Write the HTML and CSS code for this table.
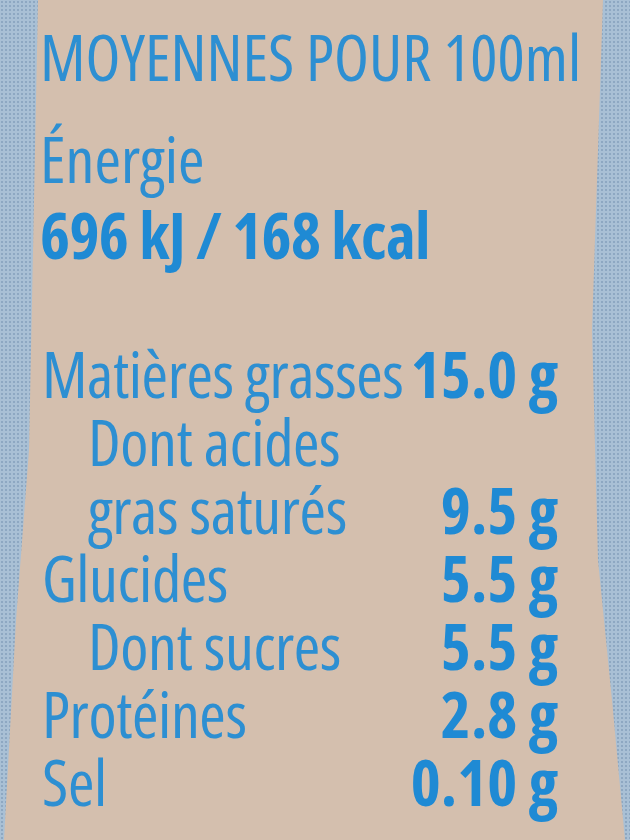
FILE: index.html
```html
<!DOCTYPE html>
<html lang="fr">
<head>
<meta charset="utf-8">
<link rel="stylesheet" href="styles.css">
</head>
<body>
<main class="label">
  <h1 class="title">MOYENNES POUR 100ml</h1>
  <section class="energy">
    <p class="name">Énergie</p>
    <p class="value">696 kJ / 168 kcal</p>
  </section>
  <section class="table">
    <div class="row"><span class="name">Matières grasses</span><span class="value">15.0 g</span></div>
    <div class="row sub"><span class="name">Dont acides</span><span class="value"></span></div>
    <div class="row sub"><span class="name">gras saturés</span><span class="value">9.5 g</span></div>
    <div class="row"><span class="name">Glucides</span><span class="value">5.5 g</span></div>
    <div class="row sub"><span class="name">Dont sucres</span><span class="value">5.5 g</span></div>
    <div class="row"><span class="name">Protéines</span><span class="value">2.8 g</span></div>
    <div class="row"><span class="name">Sel</span><span class="value">0.10 g</span></div>
  </section>
</main>
</body>
</html>
```
FILE: styles.css
```css
html, body {
  margin: 0;
  padding: 0;
}
body {
  width: 630px;
  height: 840px;
  overflow: hidden;
  background-color: #a9c0d5;
  background-image: radial-gradient(circle, #8ea8c2 0.9px, transparent 1.3px);
  background-size: 4px 4px;
  font-family: "Open Sans", "Liberation Sans", sans-serif;
  font-stretch: 75%;
  color: #2d8fd2;
}
.label {
  box-sizing: border-box;
  width: 630px;
  height: 840px;
  padding: 23px 72px 0 40px;
  background: #d4bfae;
  clip-path: polygon(38px 0, 34px 200px, 29px 450px, 16px 620px, 4px 840px, 625px 840px, 612px 700px, 598px 560px, 592px 330px, 603px 0);
  font-size: 64px;
  line-height: 68px;
}
.title {
  margin: 0;
  font-size: inherit;
  font-weight: 400;
  letter-spacing: 0;
  white-space: nowrap;
}
.energy {
  margin-top: 34px;
  display: flex;
  flex-direction: column;
  gap: 8px;
}
.energy p {
  margin: 0;
  white-space: nowrap;
}
.value {
  font-weight: 700;
  color: #1f8ad4;
  white-space: nowrap;
}
.energy .value {
  letter-spacing: -0.6px;
}
.table {
  margin-top: 71px;
  display: flex;
  flex-direction: column;
}
.row {
  display: flex;
  justify-content: space-between;
  padding-left: 2px;
}
.row .name {
  letter-spacing: -0.4px;
  white-space: nowrap;
}
.row.sub {
  padding-left: 48px;
}
```
